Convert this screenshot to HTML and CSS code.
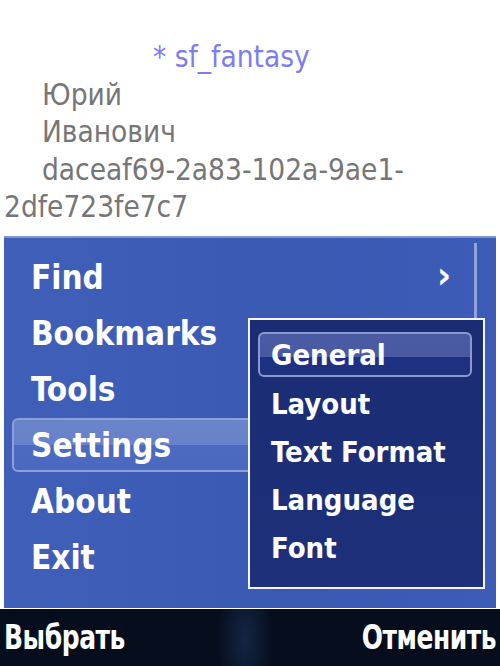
FILE: index.html
```html
<!DOCTYPE html>
<html>
<head>
<meta charset="utf-8">
<link rel="stylesheet" href="styles.css">
</head>
<body>
<div class="screen">
  <div class="content">
    <p class="title">* sf_fantasy</p>
    <p class="line">Юрий</p>
    <p class="line">Иванович</p>
    <p class="line">daceaf69-2a83-102a-9ae1-<br>2dfe723fe7c7</p>
  </div>
  <div class="menu">
    <div class="scroll"></div>
    <ul class="items">
      <li class="item"><span>Find</span><span class="arrow">›</span></li>
      <li class="item">Bookmarks</li>
      <li class="item">Tools</li>
      <li class="item selected">Settings</li>
      <li class="item">About</li>
      <li class="item">Exit</li>
    </ul>
    <div class="submenu">
      <ul class="subitems">
        <li class="subitem selected">General</li>
        <li class="subitem">Layout</li>
        <li class="subitem">Text Format</li>
        <li class="subitem">Language</li>
        <li class="subitem">Font</li>
      </ul>
    </div>
  </div>
  <div class="softkeys">
    <span class="key left">Выбрать</span>
    <span class="key right">Отменить</span>
  </div>
</div>
</body>
</html>
```
FILE: styles.css
```css
html, body {
  margin: 0;
  padding: 0;
  background: #ffffff;
}
.screen {
  width: 500px;
  height: 666px;
  display: flex;
  flex-direction: column;
  font-family: "DejaVu Sans Condensed", "DejaVu Sans", sans-serif;
  overflow: hidden;
}
.content {
  height: 236px;
  padding: 39px 0 0 4px;
  box-sizing: border-box;
  color: #767676;
  font-size: 29.5px;
  line-height: 37.5px;
}
.content p {
  margin: 0;
  text-indent: 38px;
}
.content .title {
  text-indent: 149px;
  color: #7d7df0;
}
.menu {
  position: relative;
  height: 372px;
  margin: 0 4px;
  box-sizing: border-box;
  border-top: 2px solid #7f95d6;
  background: linear-gradient(90deg, #3f5fb9 0%, #3a59b3 60%, #3c5cb7 100%);
}
.scroll {
  position: absolute;
  left: 470px;
  top: 5px;
  width: 3px;
  height: 80px;
  background: #8fa3dc;
}
.items {
  list-style: none;
  margin: 0;
  padding: 11px 0 0 8px;
}
.item {
  height: 56px;
  box-sizing: border-box;
  display: flex;
  align-items: center;
  justify-content: space-between;
  padding: 0 20px 0 18px;
  width: 460px;
  color: #ffffff;
  font-weight: bold;
  font-size: 33px;
  border: 1px solid transparent;
  border-radius: 6px;
}
.item.selected {
  height: 54px;
  margin: 1px 0;
  border: 2px solid #8da0da;
  background: linear-gradient(180deg, #6a84cb 0%, #6782ca 50%, #4c6bc0 50%, #4a69bf 100%);
  padding-left: 17px;
}
.arrow {
  font-size: 38px;
  line-height: 1;
  margin-top: -4px;
}
.submenu {
  position: absolute;
  left: 244px;
  top: 80px;
  width: 237px;
  height: 271px;
  box-sizing: border-box;
  border: 2px solid #f4f6fc;
  background: linear-gradient(180deg, #1b2c74 0%, #1d3079 100%);
}
.subitems {
  list-style: none;
  margin: 0;
  padding: 12px 11px 0 8px;
}
.subitem {
  height: 48px;
  box-sizing: border-box;
  display: flex;
  align-items: center;
  padding-left: 11px;
  color: #ffffff;
  font-weight: bold;
  font-size: 29px;
  border: 2px solid transparent;
  border-radius: 6px;
}
.subitem.selected {
  height: 45px;
  margin-bottom: 3px;
  border-color: #8c99cf;
  background: linear-gradient(180deg, #4b5ba3 0%, #4a5aa2 55%, #1f3182 55%, #1e3080 100%);
}
.softkeys {
  flex: 1;
  display: flex;
  justify-content: space-between;
  align-items: center;
  padding: 0 4px;
  margin-top: 1px;
  background:
    radial-gradient(ellipse 28px 70px at 245px 30px, rgba(28,52,95,0.6), rgba(0,0,0,0) 100%),
    #060e1d;
  color: #ffffff;
  font-size: 33px;
  font-weight: bold;
}
.key {
  display: inline-block;
  transform: scaleX(0.84);
  letter-spacing: -0.5px;
}
.key.left {
  transform-origin: left center;
}
.key.right {
  transform-origin: right center;
}
```
